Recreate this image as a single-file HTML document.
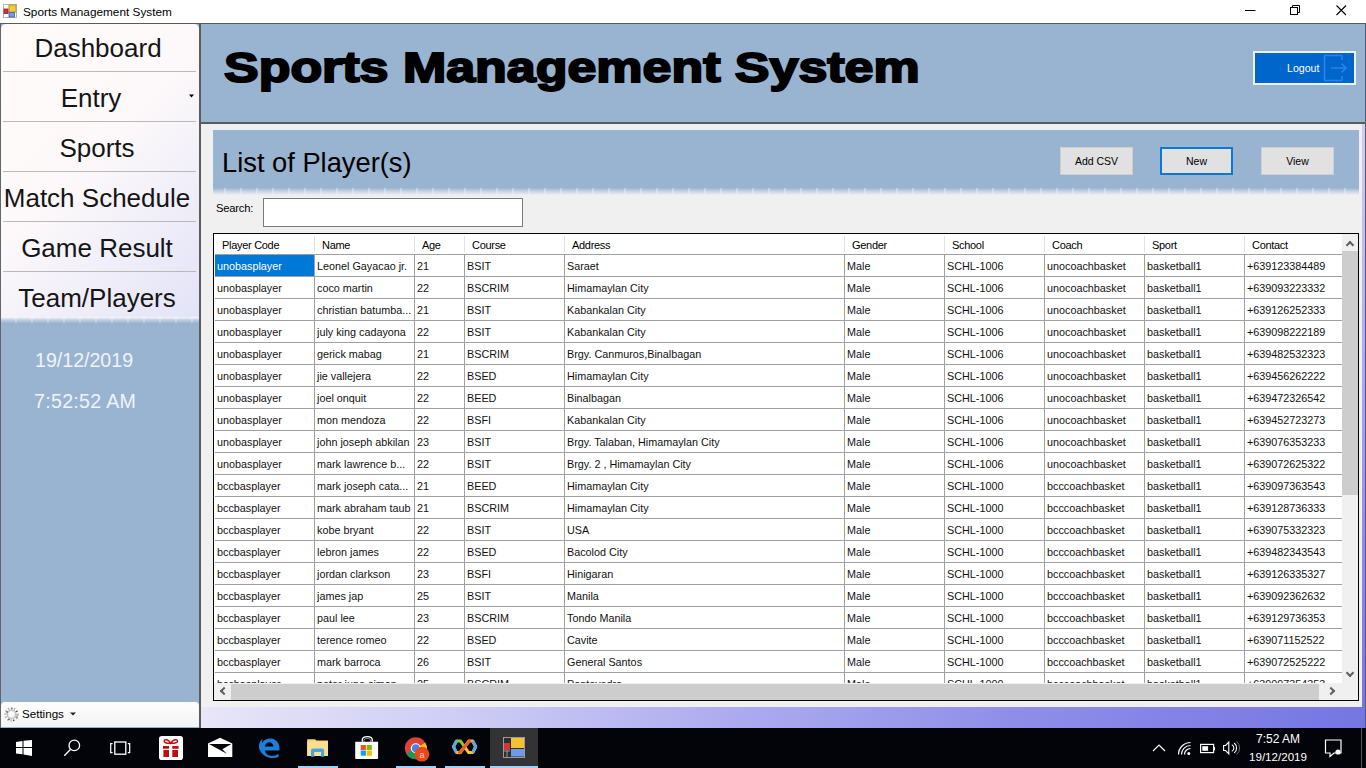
<!DOCTYPE html>
<html><head><meta charset="utf-8">
<style>
*{margin:0;padding:0;box-sizing:border-box}
html,body{width:1366px;height:768px;overflow:hidden;background:#fff;font-family:"Liberation Sans",sans-serif;color:#000}
.abs{position:absolute}
#titlebar{left:0;top:0;width:1366px;height:23px;background:#fff}
#titletext{left:23px;top:4px;font-size:11.8px;line-height:16px;color:#000;white-space:nowrap}
#topline{left:0;top:23px;width:1366px;height:1px;background:#5a5a5a}
#side{left:0;top:24px;width:199px;height:704px;background:#99b4d1}
#sideL{left:0;top:24px;width:1px;height:704px;background:#5e6670}
#sideborder{left:199px;top:24px;width:2px;height:704px;background:#5c5c5c}
#menu{left:1px;top:24px;width:198px;height:293px;border-radius:5px 5px 0 0;background:linear-gradient(135deg,#fefbf9 0%,#fdf9fa 45%,#f0eef9 72%,#e3e3f8 100%)}
.mi{position:absolute;left:0;width:198px;height:50px;font-size:26px;text-align:center;line-height:50px;white-space:nowrap;color:#151515}
.sep{position:absolute;left:2px;width:193px;height:1px;background:#b9b9b9}
#menushadow{left:1px;top:317px;width:198px;height:6px;background:repeating-linear-gradient(90deg,rgba(255,255,255,0) 0px,rgba(255,255,255,0) 14px,rgba(250,250,255,.25) 14px,rgba(250,250,255,.25) 16px),linear-gradient(180deg,rgba(250,248,251,1) 0%,rgba(250,248,251,.45) 45%,rgba(250,248,251,0) 100%)}
#hdr{left:201px;top:24px;width:1164px;height:98px;background:#99b4d1}
#hdrline{left:201px;top:122px;width:1164px;height:2px;background:#565c5c}
#rline{left:1365px;top:24px;width:1px;height:704px;background:#555a70}
#bigtitle{left:224px;top:43px;font-size:43px;line-height:48px;font-weight:bold;white-space:nowrap;transform-origin:0 0;transform:scaleX(1.208);-webkit-text-stroke:2px #000;letter-spacing:0px}
#bg{left:201px;top:124px;width:1164px;height:604px;background:linear-gradient(90deg,#e8e6f7 0%,#cfcdf4 22%,#aeacef 45%,#8e8ee9 70%,#7676e4 100%)}
#bgr{left:1361px;top:124px;width:4px;height:604px;background:linear-gradient(180deg,#d2ccf2 0%,#b0aaee 40%,#8a88e8 75%,#7474e4 100%)}
#content{left:201px;top:124px;width:1161px;height:583px;background:#f0f0f0}
#panelhl{left:212px;top:129px;width:1148px;height:60px;background:#e8f0f8}
#panel{left:213px;top:130px;width:1146px;height:58px;background:#99b4d1}
#panelfade{left:213px;top:188px;width:1146px;height:7px;background:repeating-linear-gradient(90deg,rgba(255,255,255,0) 0px,rgba(255,255,255,0) 11px,rgba(240,244,250,.38) 11px,rgba(240,244,250,.38) 13px,rgba(255,255,255,0) 13px,rgba(255,255,255,0) 16px),linear-gradient(180deg,#99b4d1 0%,#c4d2e2 45%,#f0f0f0 100%)}
#listtitle{left:222px;top:147px;font-size:27.3px;line-height:32px;white-space:nowrap}
.btn{position:absolute;height:28px;background:#e1e1e1;border:1px solid #cfcfcf;font-size:10.5px;text-align:center;line-height:27px;color:#000}
#search-l{left:216px;top:200.5px;font-size:11.2px;letter-spacing:-0.2px;line-height:14px}
#search{left:263px;top:198px;width:260px;height:29px;background:#fff;border:1px solid #7a7a7a}
#table{left:213px;top:233px;width:1146px;height:468px;background:#fff;border:1px solid #000;overflow:hidden}
#grid{position:absolute;left:0;top:0;width:1128px;height:449px;overflow:hidden}
.hc{position:absolute;top:0;height:21px;background:#fff;border-bottom:1px solid #a0a0a0;font-size:11px;letter-spacing:-0.3px;line-height:22px;padding-left:7px;white-space:nowrap}
.hc::after{content:"";position:absolute;right:0;top:2px;width:1px;height:16px;background:#e2e2e2}
.c{position:absolute;height:22px;border-right:1px solid #a0a0a0;border-bottom:1px solid #a0a0a0;font-size:10.8px;line-height:23px;padding-left:2px;white-space:nowrap;overflow:hidden;color:#111}
.c.sel{background:#0078d7;color:#fff}
#vscroll{left:1128px;top:0;width:16px;height:449px;background:#f0f0f0}
#vthumb{left:1128px;top:17px;width:16px;height:244px;background:#cdcdcd}
#hscroll{left:0;top:449px;width:1144px;height:17px;background:#f0f0f0}
#hthumb{left:17px;top:450px;width:1088px;height:16px;background:#cdcdcd}
.arr{position:absolute;width:6px;height:6px;border-left:2px solid #606060;border-top:2px solid #606060}
#logout{left:1253px;top:51px;width:103px;height:34px;background:#0066cc;border:2px solid #eef3f8}
#logouttext{left:1287px;top:61px;font-size:10.6px;line-height:14px;color:#fff}
#clock1{left:35px;top:348px;font-size:19.6px;line-height:24px;color:#f0f3f8;white-space:nowrap}
#clock2{left:34px;top:389px;font-size:19.6px;line-height:24px;letter-spacing:0.3px;color:#f0f3f8;white-space:nowrap}
#settings{left:1px;top:702px;width:198px;height:25px;background:linear-gradient(180deg,#fdfdfd,#f4f4f4);border-radius:4px 4px 0 0}
#settingstext{left:22px;top:707px;font-size:11.6px;line-height:14px}
#taskbar{left:0;top:728px;width:1366px;height:40px;background:#03030a}
.ul{position:absolute;top:766px;height:2px;background:#9fd0f5}
.tt{position:absolute;color:#fff;font-size:12px;line-height:14px;white-space:nowrap;text-align:center}
</style></head><body>
<div id="titlebar" class="abs"></div>
<svg class="abs" style="left:0;top:0" width="22" height="22" viewBox="0 0 22 22">
  <rect x="3.5" y="4.5" width="13" height="13" fill="#fff" stroke="#b5b5b5" stroke-width="1"/>
  <rect x="9" y="5" width="7" height="7" fill="#f5c842" stroke="#b89a20" stroke-width="1"/>
  <rect x="4" y="9" width="4" height="4.5" fill="#d9363a" stroke="#8f1d1d" stroke-width="0.8"/>
  <rect x="9" y="12.5" width="5.5" height="4.5" fill="#6f9ae8" stroke="#3a5fae" stroke-width="0.8"/>
</svg>
<div id="titletext" class="abs">Sports Management System</div>
<svg class="abs" style="left:1230px;top:0" width="136" height="22" viewBox="0 0 136 22">
  <line x1="15" y1="10.5" x2="25.5" y2="10.5" stroke="#000" stroke-width="1"/>
  <rect x="60.5" y="7.5" width="7" height="7" fill="none" stroke="#000" stroke-width="1"/>
  <path d="M62.5 7.5 V5.5 H69.5 V12.5 H67.5" fill="none" stroke="#000" stroke-width="1"/>
  <path d="M106.5 5.5 L116 15 M116 5.5 L106.5 15" stroke="#000" stroke-width="1.1"/>
</svg>
<div id="topline" class="abs"></div>

<div id="side" class="abs"></div>
<div id="sideL" class="abs"></div>
<div id="sideborder" class="abs"></div>
<div id="menu" class="abs">
  <div class="mi" style="top:-1px;left:-2px">Dashboard</div>
  <div class="sep" style="top:47px"></div>
  <div class="mi" style="top:49px;left:-9px">Entry</div>
  <div class="sep" style="top:97px"></div>
  <div class="mi" style="top:99px;left:-3px">Sports</div>
  <div class="sep" style="top:147px"></div>
  <div class="mi" style="top:149px;left:-3px">Match Schedule</div>
  <div class="sep" style="top:197px"></div>
  <div class="mi" style="top:199px;left:-3px">Game Result</div>
  <div class="sep" style="top:247px"></div>
  <div class="mi" style="top:249px;left:-3px">Team/Players</div>
</div>
<svg class="abs" style="left:188px;top:93px" width="8" height="6"><path d="M1 1.5 H6 L3.5 4.5 Z" fill="#000"/></svg>
<div id="menushadow" class="abs"></div>
<div id="clock1" class="abs">19/12/2019</div>
<div id="clock2" class="abs">7:52:52 AM</div>
<div id="settings" class="abs"></div>
<svg class="abs" style="left:3px;top:706px" width="17" height="17" viewBox="0 0 17 17">
  <circle cx="8.5" cy="8.4" r="5.6" fill="none" stroke="#9a9a9a" stroke-width="3.4" stroke-dasharray="1.2 1.6" opacity="0.75"/>
  <circle cx="8.5" cy="8.4" r="4" fill="none" stroke="#c4c4c4" stroke-width="1.4"/>
  <circle cx="4" cy="6" r="0.8" fill="#444"/><circle cx="13.5" cy="5.5" r="0.8" fill="#444"/><circle cx="14" cy="11" r="0.8" fill="#555"/><circle cx="6" cy="13.5" r="0.8" fill="#555"/><circle cx="9" cy="2.5" r="0.7" fill="#555"/><circle cx="10.5" cy="14.5" r="0.7" fill="#555"/>
</svg>
<div id="settingstext" class="abs">Settings</div>
<svg class="abs" style="left:69px;top:711px" width="8" height="6"><path d="M1 1.5 H7 L4 4.5 Z" fill="#222"/></svg>

<div id="hdr" class="abs"></div>
<div id="hdrline" class="abs"></div>
<div id="rline" class="abs"></div>
<div id="bigtitle" class="abs">Sports Management System</div>
<div id="logout" class="abs"></div>
<div id="logouttext" class="abs">Logout</div>
<svg class="abs" style="left:1322px;top:53px" width="30" height="30" viewBox="0 0 30 30">
  <path d="M20 7 V2.5 H2.5 V27.5 H20 V23" fill="none" stroke="#2b83e6" stroke-width="1.6"/>
  <path d="M9 15 H24 M19.5 10.5 L24 15 L19.5 19.5" fill="none" stroke="#2b83e6" stroke-width="1.6"/>
</svg>

<div id="bg" class="abs"></div>
<div id="bgr" class="abs"></div>
<div id="content" class="abs"></div>
<div id="panelhl" class="abs"></div>
<div id="panel" class="abs"></div>
<div id="panelfade" class="abs"></div>
<div id="listtitle" class="abs">List of Player(s)</div>
<div class="btn" style="left:1060px;top:147px;width:73px">Add CSV</div>
<div class="btn" style="left:1160px;top:147px;width:73px;border:2px solid #0a78d4;line-height:25px">New</div>
<div class="btn" style="left:1261px;top:147px;width:73px">View</div>
<div id="search-l" class="abs">Search:</div>
<div id="search" class="abs"></div>

<div id="table" class="abs">
 <div id="grid">
<div class="hc" style="left:1px;width:100px">Player Code</div>
<div class="hc" style="left:101px;width:100px">Name</div>
<div class="hc" style="left:201px;width:50px">Age</div>
<div class="hc" style="left:251px;width:100px">Course</div>
<div class="hc" style="left:351px;width:280px">Address</div>
<div class="hc" style="left:631px;width:100px">Gender</div>
<div class="hc" style="left:731px;width:100px">School</div>
<div class="hc" style="left:831px;width:100px">Coach</div>
<div class="hc" style="left:931px;width:100px">Sport</div>
<div class="hc" style="left:1031px;width:98px">Contact</div>
<div class="c sel" style="left:1px;top:21px;width:100px">unobasplayer</div>
<div class="c" style="left:101px;top:21px;width:100px">Leonel Gayacao jr.</div>
<div class="c" style="left:201px;top:21px;width:50px">21</div>
<div class="c" style="left:251px;top:21px;width:100px">BSIT</div>
<div class="c" style="left:351px;top:21px;width:280px">Saraet</div>
<div class="c" style="left:631px;top:21px;width:100px">Male</div>
<div class="c" style="left:731px;top:21px;width:100px">SCHL-1006</div>
<div class="c" style="left:831px;top:21px;width:100px">unocoachbasket</div>
<div class="c" style="left:931px;top:21px;width:100px">basketball1</div>
<div class="c" style="left:1031px;top:21px;width:98px">+639123384489</div>
<div class="c" style="left:1px;top:43px;width:100px">unobasplayer</div>
<div class="c" style="left:101px;top:43px;width:100px">coco martin</div>
<div class="c" style="left:201px;top:43px;width:50px">22</div>
<div class="c" style="left:251px;top:43px;width:100px">BSCRIM</div>
<div class="c" style="left:351px;top:43px;width:280px">Himamaylan City</div>
<div class="c" style="left:631px;top:43px;width:100px">Male</div>
<div class="c" style="left:731px;top:43px;width:100px">SCHL-1006</div>
<div class="c" style="left:831px;top:43px;width:100px">unocoachbasket</div>
<div class="c" style="left:931px;top:43px;width:100px">basketball1</div>
<div class="c" style="left:1031px;top:43px;width:98px">+639093223332</div>
<div class="c" style="left:1px;top:65px;width:100px">unobasplayer</div>
<div class="c" style="left:101px;top:65px;width:100px">christian batumba...</div>
<div class="c" style="left:201px;top:65px;width:50px">21</div>
<div class="c" style="left:251px;top:65px;width:100px">BSIT</div>
<div class="c" style="left:351px;top:65px;width:280px">Kabankalan City</div>
<div class="c" style="left:631px;top:65px;width:100px">Male</div>
<div class="c" style="left:731px;top:65px;width:100px">SCHL-1006</div>
<div class="c" style="left:831px;top:65px;width:100px">unocoachbasket</div>
<div class="c" style="left:931px;top:65px;width:100px">basketball1</div>
<div class="c" style="left:1031px;top:65px;width:98px">+639126252333</div>
<div class="c" style="left:1px;top:87px;width:100px">unobasplayer</div>
<div class="c" style="left:101px;top:87px;width:100px">july king cadayona</div>
<div class="c" style="left:201px;top:87px;width:50px">22</div>
<div class="c" style="left:251px;top:87px;width:100px">BSIT</div>
<div class="c" style="left:351px;top:87px;width:280px">Kabankalan City</div>
<div class="c" style="left:631px;top:87px;width:100px">Male</div>
<div class="c" style="left:731px;top:87px;width:100px">SCHL-1006</div>
<div class="c" style="left:831px;top:87px;width:100px">unocoachbasket</div>
<div class="c" style="left:931px;top:87px;width:100px">basketball1</div>
<div class="c" style="left:1031px;top:87px;width:98px">+639098222189</div>
<div class="c" style="left:1px;top:109px;width:100px">unobasplayer</div>
<div class="c" style="left:101px;top:109px;width:100px">gerick mabag</div>
<div class="c" style="left:201px;top:109px;width:50px">21</div>
<div class="c" style="left:251px;top:109px;width:100px">BSCRIM</div>
<div class="c" style="left:351px;top:109px;width:280px">Brgy. Canmuros,Binalbagan</div>
<div class="c" style="left:631px;top:109px;width:100px">Male</div>
<div class="c" style="left:731px;top:109px;width:100px">SCHL-1006</div>
<div class="c" style="left:831px;top:109px;width:100px">unocoachbasket</div>
<div class="c" style="left:931px;top:109px;width:100px">basketball1</div>
<div class="c" style="left:1031px;top:109px;width:98px">+639482532323</div>
<div class="c" style="left:1px;top:131px;width:100px">unobasplayer</div>
<div class="c" style="left:101px;top:131px;width:100px">jie vallejera</div>
<div class="c" style="left:201px;top:131px;width:50px">22</div>
<div class="c" style="left:251px;top:131px;width:100px">BSED</div>
<div class="c" style="left:351px;top:131px;width:280px">Himamaylan City</div>
<div class="c" style="left:631px;top:131px;width:100px">Male</div>
<div class="c" style="left:731px;top:131px;width:100px">SCHL-1006</div>
<div class="c" style="left:831px;top:131px;width:100px">unocoachbasket</div>
<div class="c" style="left:931px;top:131px;width:100px">basketball1</div>
<div class="c" style="left:1031px;top:131px;width:98px">+639456262222</div>
<div class="c" style="left:1px;top:153px;width:100px">unobasplayer</div>
<div class="c" style="left:101px;top:153px;width:100px">joel onquit</div>
<div class="c" style="left:201px;top:153px;width:50px">22</div>
<div class="c" style="left:251px;top:153px;width:100px">BEED</div>
<div class="c" style="left:351px;top:153px;width:280px">Binalbagan</div>
<div class="c" style="left:631px;top:153px;width:100px">Male</div>
<div class="c" style="left:731px;top:153px;width:100px">SCHL-1006</div>
<div class="c" style="left:831px;top:153px;width:100px">unocoachbasket</div>
<div class="c" style="left:931px;top:153px;width:100px">basketball1</div>
<div class="c" style="left:1031px;top:153px;width:98px">+639472326542</div>
<div class="c" style="left:1px;top:175px;width:100px">unobasplayer</div>
<div class="c" style="left:101px;top:175px;width:100px">mon mendoza</div>
<div class="c" style="left:201px;top:175px;width:50px">22</div>
<div class="c" style="left:251px;top:175px;width:100px">BSFI</div>
<div class="c" style="left:351px;top:175px;width:280px">Kabankalan City</div>
<div class="c" style="left:631px;top:175px;width:100px">Male</div>
<div class="c" style="left:731px;top:175px;width:100px">SCHL-1006</div>
<div class="c" style="left:831px;top:175px;width:100px">unocoachbasket</div>
<div class="c" style="left:931px;top:175px;width:100px">basketball1</div>
<div class="c" style="left:1031px;top:175px;width:98px">+639452723273</div>
<div class="c" style="left:1px;top:197px;width:100px">unobasplayer</div>
<div class="c" style="left:101px;top:197px;width:100px">john joseph abkilan</div>
<div class="c" style="left:201px;top:197px;width:50px">23</div>
<div class="c" style="left:251px;top:197px;width:100px">BSIT</div>
<div class="c" style="left:351px;top:197px;width:280px">Brgy. Talaban, Himamaylan City</div>
<div class="c" style="left:631px;top:197px;width:100px">Male</div>
<div class="c" style="left:731px;top:197px;width:100px">SCHL-1006</div>
<div class="c" style="left:831px;top:197px;width:100px">unocoachbasket</div>
<div class="c" style="left:931px;top:197px;width:100px">basketball1</div>
<div class="c" style="left:1031px;top:197px;width:98px">+639076353233</div>
<div class="c" style="left:1px;top:219px;width:100px">unobasplayer</div>
<div class="c" style="left:101px;top:219px;width:100px">mark lawrence b...</div>
<div class="c" style="left:201px;top:219px;width:50px">22</div>
<div class="c" style="left:251px;top:219px;width:100px">BSIT</div>
<div class="c" style="left:351px;top:219px;width:280px">Brgy. 2 , Himamaylan City</div>
<div class="c" style="left:631px;top:219px;width:100px">Male</div>
<div class="c" style="left:731px;top:219px;width:100px">SCHL-1006</div>
<div class="c" style="left:831px;top:219px;width:100px">unocoachbasket</div>
<div class="c" style="left:931px;top:219px;width:100px">basketball1</div>
<div class="c" style="left:1031px;top:219px;width:98px">+639072625322</div>
<div class="c" style="left:1px;top:241px;width:100px">bccbasplayer</div>
<div class="c" style="left:101px;top:241px;width:100px">mark joseph cata...</div>
<div class="c" style="left:201px;top:241px;width:50px">21</div>
<div class="c" style="left:251px;top:241px;width:100px">BEED</div>
<div class="c" style="left:351px;top:241px;width:280px">Himamaylan City</div>
<div class="c" style="left:631px;top:241px;width:100px">Male</div>
<div class="c" style="left:731px;top:241px;width:100px">SCHL-1000</div>
<div class="c" style="left:831px;top:241px;width:100px">bcccoachbasket</div>
<div class="c" style="left:931px;top:241px;width:100px">basketball1</div>
<div class="c" style="left:1031px;top:241px;width:98px">+639097363543</div>
<div class="c" style="left:1px;top:263px;width:100px">bccbasplayer</div>
<div class="c" style="left:101px;top:263px;width:100px">mark abraham taub</div>
<div class="c" style="left:201px;top:263px;width:50px">21</div>
<div class="c" style="left:251px;top:263px;width:100px">BSCRIM</div>
<div class="c" style="left:351px;top:263px;width:280px">Himamaylan City</div>
<div class="c" style="left:631px;top:263px;width:100px">Male</div>
<div class="c" style="left:731px;top:263px;width:100px">SCHL-1000</div>
<div class="c" style="left:831px;top:263px;width:100px">bcccoachbasket</div>
<div class="c" style="left:931px;top:263px;width:100px">basketball1</div>
<div class="c" style="left:1031px;top:263px;width:98px">+639128736333</div>
<div class="c" style="left:1px;top:285px;width:100px">bccbasplayer</div>
<div class="c" style="left:101px;top:285px;width:100px">kobe bryant</div>
<div class="c" style="left:201px;top:285px;width:50px">22</div>
<div class="c" style="left:251px;top:285px;width:100px">BSIT</div>
<div class="c" style="left:351px;top:285px;width:280px">USA</div>
<div class="c" style="left:631px;top:285px;width:100px">Male</div>
<div class="c" style="left:731px;top:285px;width:100px">SCHL-1000</div>
<div class="c" style="left:831px;top:285px;width:100px">bcccoachbasket</div>
<div class="c" style="left:931px;top:285px;width:100px">basketball1</div>
<div class="c" style="left:1031px;top:285px;width:98px">+639075332323</div>
<div class="c" style="left:1px;top:307px;width:100px">bccbasplayer</div>
<div class="c" style="left:101px;top:307px;width:100px">lebron james</div>
<div class="c" style="left:201px;top:307px;width:50px">22</div>
<div class="c" style="left:251px;top:307px;width:100px">BSED</div>
<div class="c" style="left:351px;top:307px;width:280px">Bacolod City</div>
<div class="c" style="left:631px;top:307px;width:100px">Male</div>
<div class="c" style="left:731px;top:307px;width:100px">SCHL-1000</div>
<div class="c" style="left:831px;top:307px;width:100px">bcccoachbasket</div>
<div class="c" style="left:931px;top:307px;width:100px">basketball1</div>
<div class="c" style="left:1031px;top:307px;width:98px">+639482343543</div>
<div class="c" style="left:1px;top:329px;width:100px">bccbasplayer</div>
<div class="c" style="left:101px;top:329px;width:100px">jordan clarkson</div>
<div class="c" style="left:201px;top:329px;width:50px">23</div>
<div class="c" style="left:251px;top:329px;width:100px">BSFI</div>
<div class="c" style="left:351px;top:329px;width:280px">Hinigaran</div>
<div class="c" style="left:631px;top:329px;width:100px">Male</div>
<div class="c" style="left:731px;top:329px;width:100px">SCHL-1000</div>
<div class="c" style="left:831px;top:329px;width:100px">bcccoachbasket</div>
<div class="c" style="left:931px;top:329px;width:100px">basketball1</div>
<div class="c" style="left:1031px;top:329px;width:98px">+639126335327</div>
<div class="c" style="left:1px;top:351px;width:100px">bccbasplayer</div>
<div class="c" style="left:101px;top:351px;width:100px">james jap</div>
<div class="c" style="left:201px;top:351px;width:50px">25</div>
<div class="c" style="left:251px;top:351px;width:100px">BSIT</div>
<div class="c" style="left:351px;top:351px;width:280px">Manila</div>
<div class="c" style="left:631px;top:351px;width:100px">Male</div>
<div class="c" style="left:731px;top:351px;width:100px">SCHL-1000</div>
<div class="c" style="left:831px;top:351px;width:100px">bcccoachbasket</div>
<div class="c" style="left:931px;top:351px;width:100px">basketball1</div>
<div class="c" style="left:1031px;top:351px;width:98px">+639092362632</div>
<div class="c" style="left:1px;top:373px;width:100px">bccbasplayer</div>
<div class="c" style="left:101px;top:373px;width:100px">paul lee</div>
<div class="c" style="left:201px;top:373px;width:50px">23</div>
<div class="c" style="left:251px;top:373px;width:100px">BSCRIM</div>
<div class="c" style="left:351px;top:373px;width:280px">Tondo Manila</div>
<div class="c" style="left:631px;top:373px;width:100px">Male</div>
<div class="c" style="left:731px;top:373px;width:100px">SCHL-1000</div>
<div class="c" style="left:831px;top:373px;width:100px">bcccoachbasket</div>
<div class="c" style="left:931px;top:373px;width:100px">basketball1</div>
<div class="c" style="left:1031px;top:373px;width:98px">+639129736353</div>
<div class="c" style="left:1px;top:395px;width:100px">bccbasplayer</div>
<div class="c" style="left:101px;top:395px;width:100px">terence romeo</div>
<div class="c" style="left:201px;top:395px;width:50px">22</div>
<div class="c" style="left:251px;top:395px;width:100px">BSED</div>
<div class="c" style="left:351px;top:395px;width:280px">Cavite</div>
<div class="c" style="left:631px;top:395px;width:100px">Male</div>
<div class="c" style="left:731px;top:395px;width:100px">SCHL-1000</div>
<div class="c" style="left:831px;top:395px;width:100px">bcccoachbasket</div>
<div class="c" style="left:931px;top:395px;width:100px">basketball1</div>
<div class="c" style="left:1031px;top:395px;width:98px">+639071152522</div>
<div class="c" style="left:1px;top:417px;width:100px">bccbasplayer</div>
<div class="c" style="left:101px;top:417px;width:100px">mark barroca</div>
<div class="c" style="left:201px;top:417px;width:50px">26</div>
<div class="c" style="left:251px;top:417px;width:100px">BSIT</div>
<div class="c" style="left:351px;top:417px;width:280px">General Santos</div>
<div class="c" style="left:631px;top:417px;width:100px">Male</div>
<div class="c" style="left:731px;top:417px;width:100px">SCHL-1000</div>
<div class="c" style="left:831px;top:417px;width:100px">bcccoachbasket</div>
<div class="c" style="left:931px;top:417px;width:100px">basketball1</div>
<div class="c" style="left:1031px;top:417px;width:98px">+639072525222</div>
<div class="c" style="left:1px;top:439px;width:100px">bccbasplayer</div>
<div class="c" style="left:101px;top:439px;width:100px">peter june simon</div>
<div class="c" style="left:201px;top:439px;width:50px">25</div>
<div class="c" style="left:251px;top:439px;width:100px">BSCRIM</div>
<div class="c" style="left:351px;top:439px;width:280px">Pontevedra</div>
<div class="c" style="left:631px;top:439px;width:100px">Male</div>
<div class="c" style="left:731px;top:439px;width:100px">SCHL-1000</div>
<div class="c" style="left:831px;top:439px;width:100px">bcccoachbasket</div>
<div class="c" style="left:931px;top:439px;width:100px">basketball1</div>
<div class="c" style="left:1031px;top:439px;width:98px">+639097354353</div>
 </div>
 <div id="vscroll" class="abs"></div>
 <div id="vthumb" class="abs"></div>
 <div class="arr" style="left:1133px;top:8px;transform:rotate(45deg)"></div>
 <div class="arr" style="left:1133px;top:436px;transform:rotate(225deg)"></div>
 <div id="hscroll" class="abs"></div>
 <div id="hthumb" class="abs"></div>
 <div class="arr" style="left:7px;top:454px;transform:rotate(-45deg)"></div>
 <div class="arr" style="left:1114px;top:454px;transform:rotate(135deg)"></div>
</div>

<div id="taskbar" class="abs"></div>
<svg class="abs" style="left:0;top:728px" width="1366" height="40" viewBox="0 728 1366 40">
  <!-- start -->
  <path d="M16 741.9 L22.5 740.9 V747 H16 Z M23.5 740.8 L32 739.9 V747 H23.5 Z M16 748 H22.5 V754.3 L16 753.5 Z M23.5 748 H32 V756 L23.5 754.6 Z" fill="#fff"/>
  <!-- search -->
  <circle cx="74.3" cy="745.4" r="5.3" fill="none" stroke="#fff" stroke-width="1.3"/>
  <path d="M70.6 749.2 L64.3 755.7" stroke="#fff" stroke-width="1.4"/>
  <!-- task view -->
  <rect x="114.8" y="742" width="11" height="12.2" fill="none" stroke="#fff" stroke-width="1.3"/>
  <path d="M112.6 743.6 H110.7 V752.6 H112.6 M127.8 743.6 H129.7 V752.6 H127.8" fill="none" stroke="#fff" stroke-width="1.2"/>
  <!-- gift -->
  <rect x="159" y="736" width="24" height="24" rx="2.8" fill="#fff"/>
  <path d="M163 745.9 H169 V748.7 H163 Z M172.3 745.9 H178.6 V748.7 H172.3 Z M163.4 750 H169 V757 H163.4 Z M172.3 750 H178 V757 H172.3 Z" fill="#c00d12"/>
  <path d="M170.7 743.2 C168.5 739.5 164.2 738.6 164.2 741.2 C164.2 743 167.5 743.4 170.7 743.2 C173.9 743.4 177.5 743 177.5 741.2 C177.5 738.6 173 739.5 170.7 743.2 Z" fill="none" stroke="#c00d12" stroke-width="1.5"/>
  <!-- mail -->
  <path d="M208 743.5 L220.1 737.8 L232.3 743.5 V757 H208 Z" fill="#fff"/>
  <path d="M209 744 H231.3 L222.3 749.3 L226.8 753.8 Z" fill="#03030a"/>
  <!-- edge -->
  <path d="M277.5 750.5 H265 C265.5 754.5 269.5 756.5 273.5 755.8 C275.5 755.5 277 754.8 278.5 753.8 V757 C276 758 273.5 758.3 271 758 C264.5 757 260.5 753 259 748 C258.5 744 260 740.5 263 738.8 C262 740.5 261.8 742 262 743 C264 739.5 267.5 738 271.5 738.5 C276.5 739.3 279.5 743.5 279.5 748 V750.5 Z M265 746.5 H273.5 C273.3 744 271.5 742.3 269 742.3 C266.8 742.5 265.2 744.3 265 746.5 Z" fill="#1e7fd8"/>
  <!-- explorer -->
  <path d="M307.2 739.2 H315 L316.5 740.5 H328 V756 H307.2 Z" fill="#f7d47a"/>
  <path d="M307.2 741.5 H328 V756 H307.2 Z" fill="#fcdf8e"/>
  <path d="M311 756.8 V750.5 C311 749.2 312 748.4 313.3 748.4 H321.9 C323.2 748.4 324.2 749.2 324.2 750.5 V756.8 H321 V752 H314.2 V756.8 Z" fill="#47a6df"/>
  <!-- store -->
  <path d="M355.2 741.8 H378.1 V758.2 C378.1 758.7 377.7 759 377.2 759 H356.1 C355.6 759 355.2 758.7 355.2 758.2 Z" fill="#fff"/>
  <path d="M362.3 741.8 V740 C362.3 735.6 372.3 735.6 372.3 740 V741.8" fill="none" stroke="#fff" stroke-width="1.3"/>
  <path d="M364 741.8 V740.5 C364 737.8 370.6 737.8 370.6 740.5 V741.8" fill="none" stroke="#fff" stroke-width="0.8" opacity="0.7"/>
  <rect x="360.7" y="745" width="5.2" height="5.1" fill="#f25022"/>
  <rect x="366.6" y="745" width="5.2" height="5.1" fill="#7fba00"/>
  <rect x="360.7" y="750.6" width="5.2" height="5.1" fill="#00a4ef"/>
  <rect x="366.6" y="750.6" width="5.2" height="5.1" fill="#ffb900"/>
  <!-- chrome -->
  <circle cx="415.8" cy="748.2" r="11" fill="#db4437"/>
  <path d="M415.8 748.2 L406.3 753.7 A11 11 0 0 0 425.3 753.7 Z" fill="#0f9d58"/>
  <path d="M415.8 748.2 L425.3 753.7 A11 11 0 0 0 425.3 742.7 Z" fill="#f4c20d"/>
  <circle cx="415.8" cy="748.2" r="5" fill="#fff"/>
  <circle cx="415.8" cy="748.2" r="3.9" fill="#4285f4"/>
  <circle cx="421.9" cy="754.2" r="7.4" fill="#e8481c"/>
  <text x="421.9" y="757.6" style="font-family:'Liberation Sans',sans-serif;font-size:9px" fill="#f6d0c0" text-anchor="middle">a</text>
  <!-- infinity -->
  <path d="M464.6 746.8 L460.5 741 H456.5 L453.5 746.8 L456.5 752.6 H460.5 Z" fill="none" stroke="#8cc63f" stroke-width="3" stroke-linejoin="round"/>
  <path d="M456.5 741 L453.5 746.8 L456.5 752.6" fill="none" stroke="#5aa9e6" stroke-width="3"/>
  <path d="M460.5 752.6 H456.5" fill="none" stroke="#f9c623" stroke-width="3"/>
  <path d="M464.6 746.8 L468.7 741 H472.7 L475.7 746.8 L472.7 752.6 H468.7 Z" fill="none" stroke="#f9c623" stroke-width="3" stroke-linejoin="round"/>
  <path d="M472.7 741 L475.7 746.8 L472.7 752.6" fill="none" stroke="#5aa9e6" stroke-width="3"/>
  <path d="M459.5 752.5 L469.7 741" stroke="#ee5a2a" stroke-width="3.2" stroke-linecap="round"/>
  <!-- active app -->
  <rect x="490" y="728" width="48" height="40" fill="#333335"/>
  <rect x="503.5" y="737.5" width="21" height="20" fill="#2e2e30" stroke="#9a9a9a" stroke-width="1"/>
  <rect x="511" y="738" width="13" height="10" fill="#f2c230"/>
  <rect x="504" y="743" width="6" height="7" fill="#d3353a"/>
  <rect x="511" y="749" width="13" height="7.5" fill="#6f9ae8"/>
  <path d="M504 751 H510 M507 750.5 V757" stroke="#9a9a9a" stroke-width="1"/>
  <!-- tray -->
  <path d="M1153 751 L1159 745 L1165 751" fill="none" stroke="#fff" stroke-width="1.2"/>
  <path d="M1178.5 754.5 A12 12 0 0 1 1190.5 742.5 M1181.5 754.5 A9 9 0 0 1 1190.5 745.5 M1184.5 754.5 A6 6 0 0 1 1190.5 748.5" fill="none" stroke="#fff" stroke-width="1.2"/>
  <circle cx="1188.8" cy="753.6" r="1.5" fill="#fff"/>
  <rect x="1200.6" y="744.4" width="13" height="8.2" fill="none" stroke="#fff" stroke-width="1.2"/>
  <rect x="1213.6" y="746.8" width="1.4" height="3.5" fill="#fff"/>
  <rect x="1202.3" y="746.2" width="5.8" height="4.6" fill="#fff"/>
  <path d="M1223.6 745.5 H1225.6 L1228.8 742.2 V753.8 L1225.6 750.5 H1223.6 Z" fill="none" stroke="#fff" stroke-width="1.1"/>
  <path d="M1231.8 744.8 A3.5 3.5 0 0 1 1231.8 751.2 M1234.2 743 A6.5 6.5 0 0 1 1234.2 753" fill="none" stroke="#fff" stroke-width="1.1"/>
  <path d="M1236.8 741.5 A9 9 0 0 1 1236.8 754.5" fill="none" stroke="#777" stroke-width="0.9"/>
  <!-- notification -->
  <path d="M1325.5 740 H1341 V753 H1334 L1330 756.5 V753 H1325.5 Z" fill="none" stroke="#fff" stroke-width="1.2"/>
  <circle cx="1338" cy="752" r="2.6" fill="#fff"/>
  <rect x="1361" y="728" width="1" height="40" fill="#555"/>
</svg>
<div class="ul" style="left:298px;width:40px"></div>
<div class="ul" style="left:396px;width:40px"></div>
<div class="ul" style="left:445px;width:40px"></div>
<div class="ul" style="left:490px;width:48px"></div>
<div class="tt" style="left:1248px;top:732px;width:60px">7:52 AM</div>
<div class="tt" style="left:1248px;top:749.5px;width:60px;font-size:11.6px">19/12/2019</div>

</body></html>
